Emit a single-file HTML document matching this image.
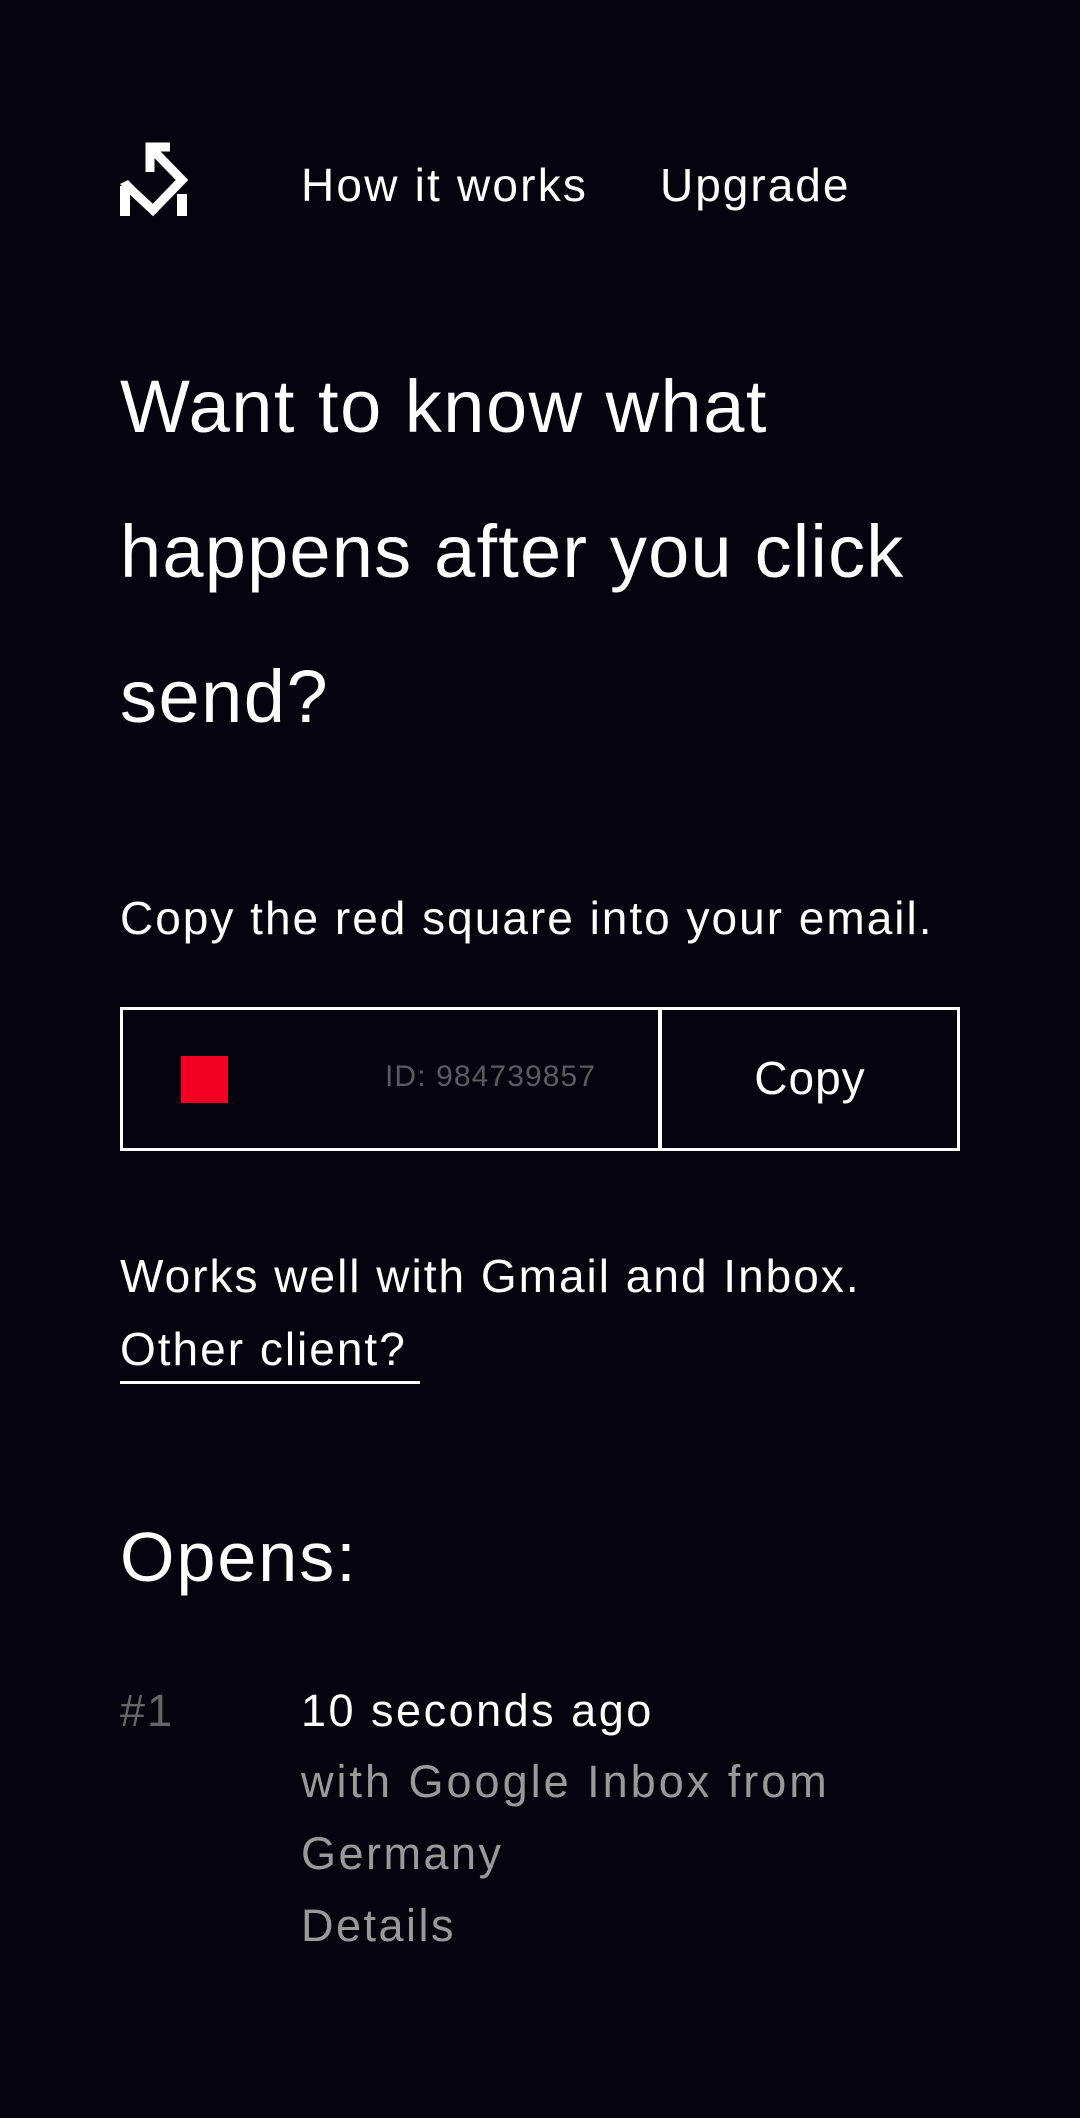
<!DOCTYPE html>
<html><head><meta charset="utf-8"><style>
html,body{margin:0;padding:0;background:#05030d;}
body{width:1080px;height:2118px;position:relative;overflow:hidden;font-family:"Liberation Sans",sans-serif;color:#fff;}
.t{position:absolute;white-space:nowrap;line-height:1;}
</style></head><body>
<svg style="position:absolute;left:0;top:0" width="220" height="240">
<g fill="none" stroke="#fff" stroke-width="9" stroke-linejoin="miter" stroke-linecap="butt">
<polyline points="150,172 150,147 170,147"/>
<polyline points="150,147 182,180 153,210 125,184"/>
</g>
<rect x="120" y="186" width="10" height="30" fill="#fff"/>
<rect x="177" y="194" width="10" height="22" fill="#fff"/>
<polygon points="120,184 128,180 153,206 153,216" fill="#fff"/>
</svg>
<div class="t" style="left:301px;top:162px;font-size:46px;letter-spacing:2.2px;">How it works</div>
<div class="t" style="left:660px;top:162px;font-size:46px;letter-spacing:2px;">Upgrade</div>
<div class="t" style="left:120px;top:370px;font-size:74px;letter-spacing:1.5px;">Want to know what</div>
<div class="t" style="left:120px;top:515px;font-size:74px;letter-spacing:1.2px;">happens after you click</div>
<div class="t" style="left:120px;top:660px;font-size:74px;letter-spacing:1.5px;">send?</div>
<div class="t" style="left:120px;top:895px;font-size:46px;letter-spacing:2px;">Copy the red square into your email.</div>
<div style="position:absolute;left:120px;top:1007px;width:535px;height:138px;border:3px solid #fff;"></div>
<div style="position:absolute;left:659px;top:1007px;width:295px;height:138px;border:3px solid #fff;"></div>
<div style="position:absolute;left:181px;top:1056px;width:47px;height:47px;background:#f40022;"></div>
<div class="t" style="left:385px;top:1062px;font-size:30px;letter-spacing:1.1px;color:#5a5a5f;">ID: 984739857</div>
<div class="t" style="left:660px;width:300px;text-align:center;top:1055px;font-size:46px;letter-spacing:1px;">Copy</div>
<div class="t" style="left:120px;top:1253px;font-size:46px;letter-spacing:2px;">Works well with Gmail and Inbox.</div>
<div class="t" style="left:120px;top:1326px;font-size:46px;letter-spacing:2px;">Other client?</div>
<div style="position:absolute;left:120px;top:1381px;width:300px;height:3px;background:#fff;"></div>
<div class="t" style="left:120px;top:1522px;font-size:70px;letter-spacing:2px;">Opens:</div>
<div class="t" style="left:120px;top:1688px;font-size:45px;letter-spacing:2px;color:#666;">#1</div>
<div class="t" style="left:301px;top:1688px;font-size:45px;letter-spacing:2.5px;">10 seconds ago</div>
<div class="t" style="left:301px;top:1759px;font-size:45px;letter-spacing:3px;color:#999;">with Google Inbox from</div>
<div class="t" style="left:301px;top:1831px;font-size:45px;letter-spacing:2.5px;color:#999;">Germany</div>
<div class="t" style="left:301px;top:1903px;font-size:45px;letter-spacing:2.5px;color:#999;">Details</div>
</body></html>
